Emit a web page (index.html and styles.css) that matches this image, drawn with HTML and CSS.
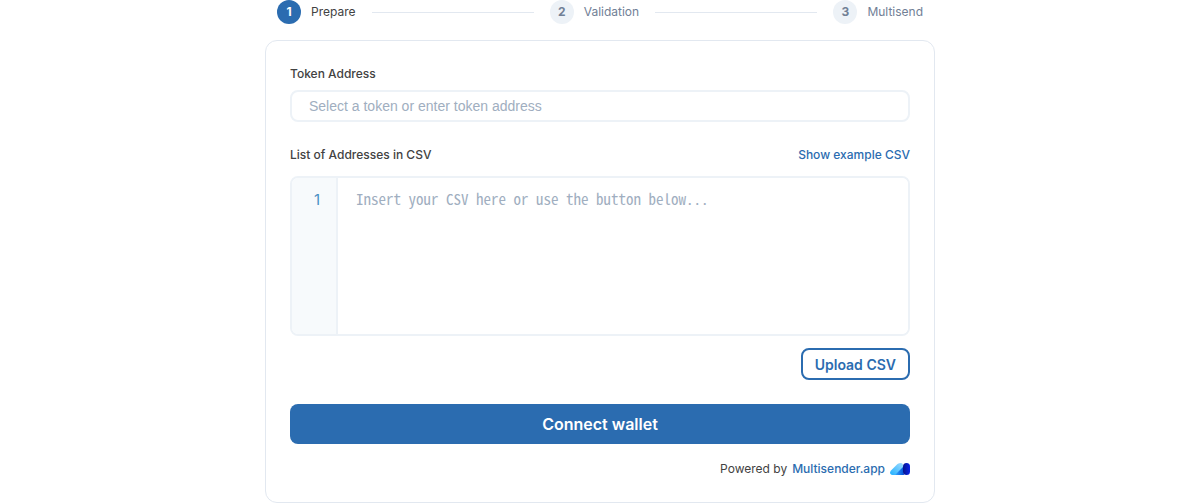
FILE: index.html
```html
<!DOCTYPE html>
<html lang="en">
<head>
<meta charset="utf-8">
<meta name="viewport" content="width=device-width, initial-scale=1">
<title>Multisender</title>
<link rel="stylesheet" href="styles.css">
</head>
<body>
<main class="widget">
  <ol class="steps">
    <li class="step step-active"><span class="step-number">1</span>Prepare</li>
    <li class="step-line" aria-hidden="true"></li>
    <li class="step"><span class="step-number">2</span>Validation</li>
    <li class="step-line" aria-hidden="true"></li>
    <li class="step"><span class="step-number">3</span>Multisend</li>
  </ol>
  <form class="card">
    <label class="label" for="token">Token Address</label>
    <input class="token-input" id="token" type="text" placeholder="Select a token or enter token address">
    <div class="list-header">
      <label class="label" for="csv">List of Addresses in CSV</label>
      <a class="link" href="#">Show example CSV</a>
    </div>
    <div class="editor">
      <div class="gutter" aria-hidden="true">1</div>
      <textarea class="csv" id="csv" placeholder="Insert your CSV here or use the button below..."></textarea>
    </div>
    <button class="upload" type="button">Upload CSV</button>
    <button class="connect" type="button">Connect wallet</button>
    <footer class="powered">
      <span>Powered by</span>
      <a class="link" href="#">Multisender.app</a>
      <svg class="logo" viewBox="0 0 20 12" aria-hidden="true">
        <defs>
          <linearGradient id="light" x1="0" y1="1" x2="1" y2="0"><stop offset="0" stop-color="#20b0ff"/><stop offset="1" stop-color="#a0dcff"/></linearGradient>
          <linearGradient id="mid" x1="0" y1="0" x2="1" y2="0"><stop offset="0" stop-color="#35a8ff"/><stop offset="1" stop-color="#0050d8"/></linearGradient>
          <linearGradient id="dark" x1="0" y1="0" x2="1" y2="0"><stop offset="0" stop-color="#05148c"/><stop offset="1" stop-color="#0822e8"/></linearGradient>
        </defs>
        <path fill="url(#light)" d="M7.500 1Q9 0 11 0Q12.500 0 13 1.500V5L6 12H2.500C0 12-.8 9.500 1 7.500Z"/>
        <path fill="url(#mid)" d="M5 12L13 4L14 12Z"/>
        <rect x="13" width="7" height="12" rx="3.500" fill="url(#dark)"/>
      </svg>
    </footer>
  </form>
</main>
</body>
</html>
```
FILE: styles.css
```css
* {
  box-sizing: border-box;
}

body {
  margin: 0;
  background: #fff;
  color: #424242;
  font-family: Inter, sans-serif;
  font-size: 12px;
  line-height: 18px;
  text-rendering: optimizeLegibility;
}

.widget {
  max-width: 670px;
  margin: 0 auto;
}

.steps {
  display: flex;
  align-items: center;
  gap: 16px;
  margin: 0 0 16px;
  padding: 0 12px;
  list-style: none;
}

.step {
  display: flex;
  align-items: center;
  gap: 10px;
  color: #718096;
}

.step-active {
  color: #424242;
}

.step-number {
  display: grid;
  place-items: center;
  width: 24px;
  height: 24px;
  border-radius: 50%;
  background: #edf2f7;
  font-weight: 700;
}

.step-active .step-number {
  background: #2b6cb0;
  color: #fff;
}

.step-line {
  flex: 1;
  height: 1px;
  background: #e2e8f0;
}

.card {
  display: flex;
  flex-direction: column;
  padding: 24px;
  border: 1px solid #e2e8f0;
  border-radius: 12px;
}

.label {
  font-weight: 500;
}

.token-input {
  height: 32px;
  margin: 7px 0 24px;
  padding: 0 17px;
  border: 2px solid #edf2f7;
  border-radius: 8px;
  background: #fff;
  color: #424242;
  font-family: "Liberation Sans", Arial, sans-serif;
  font-size: 14px;
}

.token-input::placeholder,
.csv::placeholder {
  color: #a0aec0;
  opacity: 1;
}

.list-header {
  display: flex;
  justify-content: space-between;
  margin-bottom: 12px;
}

.link {
  color: #2b6cb0;
  font-weight: 500;
  text-decoration: none;
}

.editor {
  display: flex;
  height: 160px;
  border: 2px solid #edf2f7;
  border-radius: 8px;
  overflow: hidden;
}

.gutter {
  width: 46px;
  padding: 12px 16px;
  border-right: 2px solid #edf2f7;
  background: #f7fafc;
  color: #4a90c4;
  font-size: 15px;
  line-height: 20px;
  text-align: right;
}

.csv {
  flex: 1;
  padding: 12px 18px;
  border: 0;
  outline: 0;
  resize: none;
  background: #fff;
  color: #424242;
  font-family: "Noto Sans Mono CJK JP", "Noto Sans Mono CJK SC", "Liberation Mono", monospace;
  font-size: 15px;
  line-height: 18px;
}

.upload,
.connect {
  border-radius: 8px;
  font-family: inherit;
  font-weight: 600;
  cursor: pointer;
}

.upload {
  align-self: flex-end;
  height: 32px;
  margin: 12px 0 24px;
  padding: 0 12px;
  border: 2px solid #2b6cb0;
  background: #fff;
  color: #2b6cb0;
  font-size: 14px;
}

.connect {
  height: 40px;
  border: 0;
  background: #2b6cb0;
  color: #fff;
  font-size: 16px;
}

.powered {
  display: flex;
  align-items: center;
  justify-content: flex-end;
  gap: 5px;
  margin-top: 16px;
}

.logo {
  width: 20px;
  height: 12px;
}
```
